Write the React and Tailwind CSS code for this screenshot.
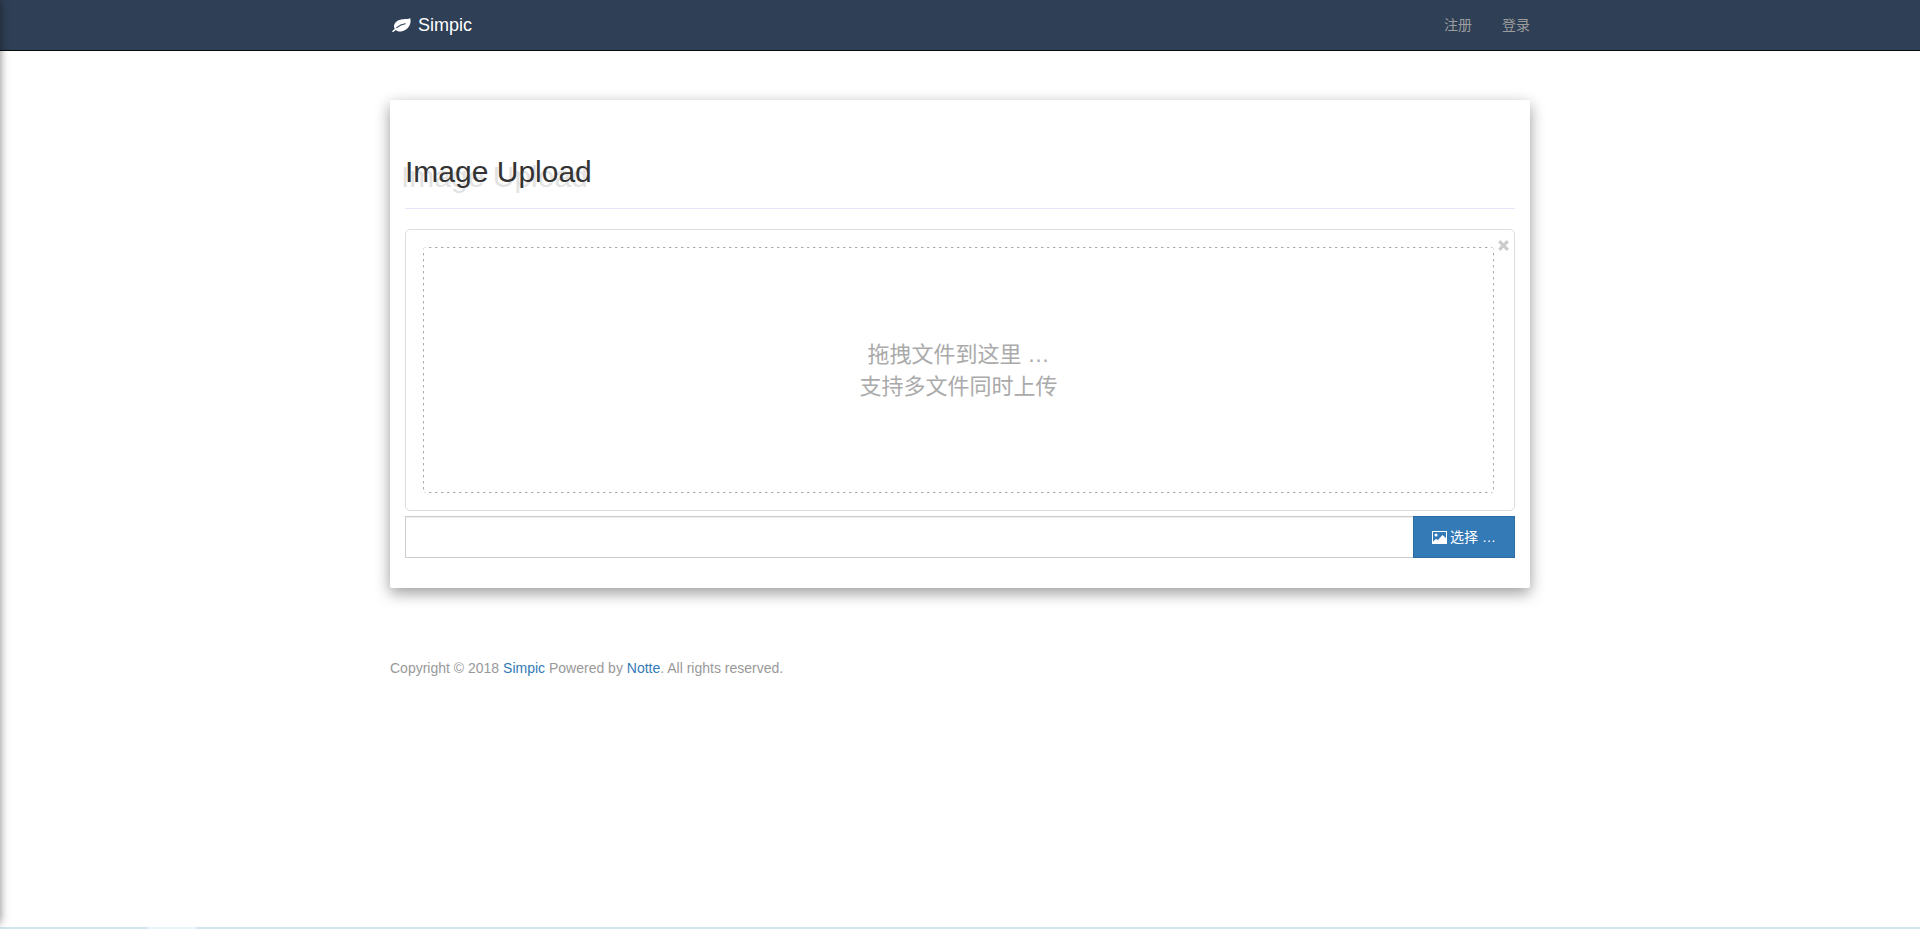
import React from "react";

function LeafIcon() {
  return (
    <svg viewBox="0 0 19 14" className="h-[14px] w-[19px]" aria-hidden="true">
      <path
        fill="currentColor"
        d="M18.1 0C17 1.3 14 1 11 1.2 6 1.5 2 4.5 2 8.2c0 1.1.3 2 .8 2.8-1 .8-1.9 1.4-2.5 1.9-.5.7.4 1.5 1.2.9L4 11.9c1 1.2 3 1.7 5 1.5 5.5-.6 9.5-5.2 9.6-10.2 0-1.2-.1-2.4-.5-3.2z"
      />
      <path d="M4.8 9.6C7.2 7.4 9 6.1 13.2 5.7" fill="none" stroke="#2f4056" strokeWidth="1.1" strokeLinecap="round" />
    </svg>
  );
}

function PictureIcon() {
  return (
    <svg viewBox="0 0 15 13" className="h-[13px] w-[15px]" fill="currentColor" aria-hidden="true">
      <path fillRule="evenodd" d="M0 0h15v13H0zM1 1v9.5l3-2.5 2 1 4.5-5L14 7V1z" />
      <circle cx="4" cy="4" r="1.5" />
    </svg>
  );
}

function Navbar() {
  return (
    <header className="border-b border-[#080808] bg-[#2f4056]">
      <div className="mx-auto flex h-[50px] max-w-[1140px] items-center justify-between">
        <a href="#" className="flex items-center gap-[7px] pl-0.5 text-lg leading-5 text-white">
          <LeafIcon />
          Simpic
        </a>
        <nav className="flex gap-[30px] text-sm leading-5 text-[#9d9d9d]">
          <a href="#register">注册</a>
          <a href="#login">登录</a>
        </nav>
      </div>
    </header>
  );
}

function Preview() {
  return (
    <div className="relative mb-[5px] rounded-[5px] border border-[#ddd] py-[17px] pr-5 pl-[17px]">
      <button
        type="button"
        aria-label="关闭"
        className="absolute top-2.5 right-[5px] flex size-[11px] text-[#ccc]"
      >
        <svg viewBox="0 0 11 11" className="size-full" stroke="currentColor" strokeWidth="3.2" aria-hidden="true">
          <path d="M1.2 1.2l8.6 8.6M9.8 1.2l-8.6 8.6" />
        </svg>
      </button>
      <div className="flex h-[246px] items-center justify-center rounded bg-[image:repeating-linear-gradient(90deg,#aaa_0_2px,#ddd_2px_3px,transparent_3px_6px),repeating-linear-gradient(90deg,#aaa_0_2px,#ddd_2px_3px,transparent_3px_6px),repeating-linear-gradient(180deg,#aaa_0_2px,#ddd_2px_3px,transparent_3px_6px),repeating-linear-gradient(180deg,#aaa_0_2px,#ddd_2px_3px,transparent_3px_6px)] bg-[size:100%_1px,100%_1px,1px_100%,1px_100%] bg-[position:0_0,0_100%,0_0,100%_0] bg-no-repeat pt-0.5 text-center text-[22px] leading-8 text-[#aaa]">
        <p>
          拖拽文件到这里 …
          <br />
          支持多文件同时上传
        </p>
      </div>
    </div>
  );
}

function UploadCard() {
  return (
    <main className="rounded-[2px] bg-white px-[15px] pt-[52px] pb-[30px] shadow-[0_5px_15px_rgba(0,0,0,0.4)]">
      <h1 className="border-b border-[#e6e6fa] pb-[17px] text-[30px] leading-[39px] text-[#333] [text-shadow:-4px_5px_0_#e3e3e3]">
        Image Upload
      </h1>
      <div className="pt-5">
        <Preview />
        <div className="flex h-[42px]">
          <input
            type="text"
            readOnly
            aria-label="文件"
            className="min-w-0 flex-1 border border-r-0 border-[#ccc] px-3 shadow-[inset_0_1px_1px_rgba(0,0,0,0.075)] outline-none"
          />
          <button
            type="button"
            className="flex w-[102px] items-center justify-center gap-[3px] border border-[#2e6da4] bg-[#337ab7] text-sm leading-5 text-white"
          >
            <PictureIcon />
            选择 …
          </button>
        </div>
      </div>
    </main>
  );
}

export default function App() {
  return (
    <div className="relative flex min-h-screen flex-col overflow-hidden bg-white font-['Liberation_Sans','Noto_Sans_CJK_SC',sans-serif]">
      <Navbar />
      <div className="mx-auto w-full max-w-[1140px] flex-1 pt-[49px]">
        <UploadCard />
        <footer className="pt-[70px] text-sm leading-5 text-[#999]">
          Copyright © 2018 <a href="#simpic" className="text-[#337ab7]">Simpic</a> Powered by{" "}
          <a href="#notte" className="text-[#337ab7]">Notte</a>. All rights reserved.
        </footer>
      </div>
      <div className="flex h-0.5 bg-[#d1e6ee]">
        <div className="ml-[148px] w-12 bg-[#e8f4f7]" />
      </div>
      <div className="pointer-events-none absolute top-0 bottom-1.5 -left-2.5 w-2.5 shadow-[0_0_10px_rgba(0,0,0,0.5)]" />
    </div>
  );
}
